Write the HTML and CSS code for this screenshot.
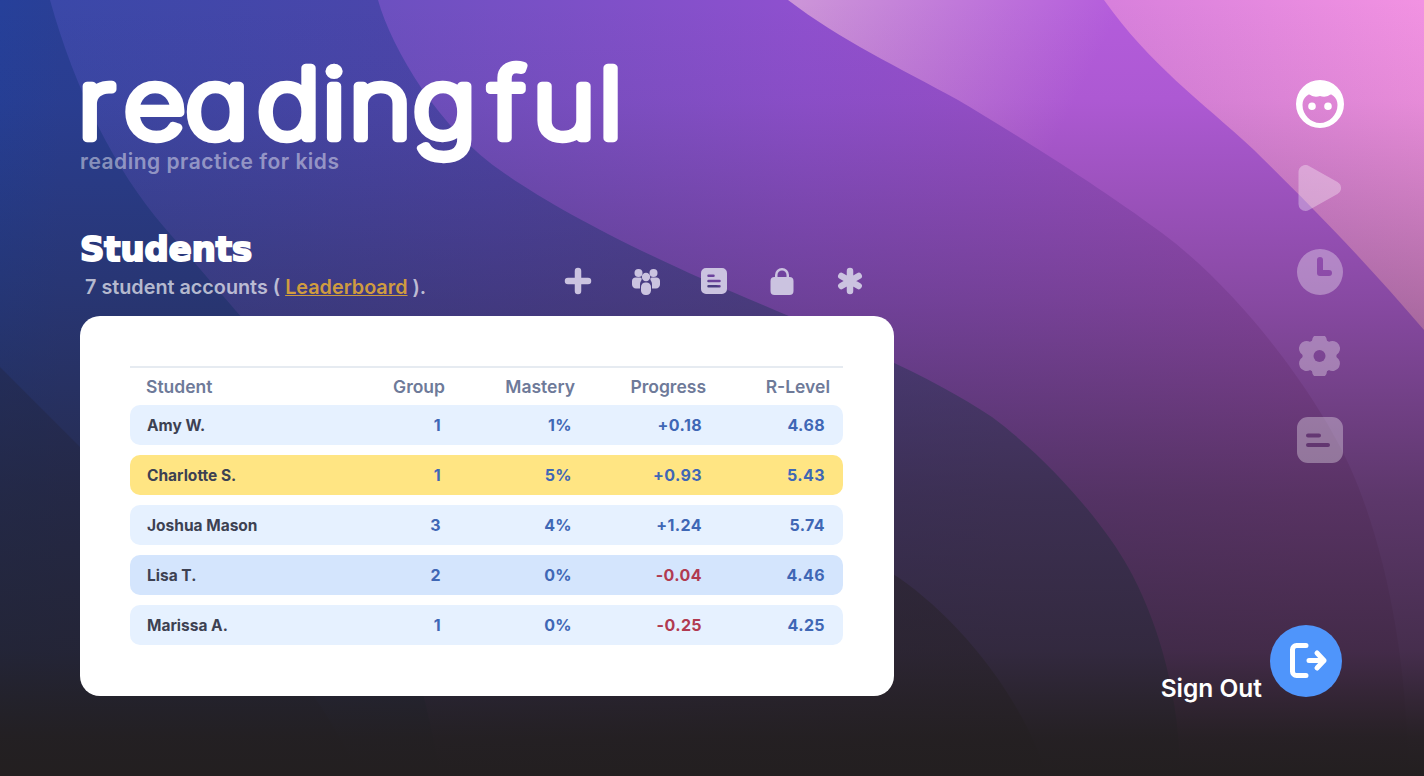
FILE: index.html
```html
<!DOCTYPE html>
<html lang="en">
<head>
    <meta charset="UTF-8">
    <title>Readingful - Students</title>
    <link rel="stylesheet" href="styles.css">
</head>
<body>
    <svg class="backdrop" viewBox="0 0 1424 776" preserveAspectRatio="none" aria-hidden="true">
        <defs>
            <linearGradient id="band0" gradientUnits="userSpaceOnUse" x1="0" y1="0" x2="60" y2="0">
                <stop offset="0" stop-color="#26409a"/>
                <stop offset="1" stop-color="#2a3f96"/>
            </linearGradient>
            <linearGradient id="band1" gradientUnits="userSpaceOnUse" x1="50" y1="0" x2="1000" y2="0">
                <stop offset="0" stop-color="#3a48a8"/>
                <stop offset="0.47" stop-color="#5045ac"/>
                <stop offset="1" stop-color="#6449a0"/>
            </linearGradient>
            <linearGradient id="band2" gradientUnits="userSpaceOnUse" x1="380" y1="0" x2="1300" y2="0">
                <stop offset="0" stop-color="#6c50c0"/>
                <stop offset="0.46" stop-color="#8f50cf"/>
                <stop offset="1" stop-color="#a850c9"/>
            </linearGradient>
            <linearGradient id="band3" gradientUnits="userSpaceOnUse" x1="800" y1="0" x2="1060" y2="130">
                <stop offset="0" stop-color="#cc94d8"/>
                <stop offset="1" stop-color="#b45cdc"/>
            </linearGradient>
            <linearGradient id="band4" gradientUnits="userSpaceOnUse" x1="1120" y1="60" x2="1424" y2="10">
                <stop offset="0" stop-color="#d880dc"/>
                <stop offset="1" stop-color="#f292e2"/>
            </linearGradient>
            <linearGradient id="deep" gradientUnits="userSpaceOnUse" x1="300" y1="0" x2="880" y2="0">
                <stop offset="0" stop-color="#231f20" stop-opacity="0"/>
                <stop offset="1" stop-color="#231f20" stop-opacity="0.4"/>
            </linearGradient>
            <linearGradient id="fade" x1="0" y1="0" x2="0" y2="1">
                <stop offset="0" stop-color="#231f20" stop-opacity="0"/>
                <stop offset="0.13" stop-color="#231f20" stop-opacity="0.05"/>
                <stop offset="0.39" stop-color="#231f20" stop-opacity="0.31"/>
                <stop offset="0.64" stop-color="#231f20" stop-opacity="0.6"/>
                <stop offset="0.84" stop-color="#231f20" stop-opacity="0.76"/>
                <stop offset="0.9" stop-color="#231f20" stop-opacity="0.88"/>
                <stop offset="0.95" stop-color="#231f20" stop-opacity="0.97"/>
                <stop offset="1" stop-color="#231f20"/>
            </linearGradient>
        </defs>
        <rect width="1424" height="776" fill="url(#band0)"/>
        <path fill="url(#band1)" d="M50 0C75 90 115 170 164 227C200 268 225 300 280 360C340 430 420 640 440 776H1424V0Z"/>
        <path class="shade" d="M0 367L80 447C200 560 300 650 360 776H0Z"/>
        <path fill="url(#deep)" d="M300 440C600 470 800 515 890 572C950 610 1020 690 1047 776H300Z"/>
        <path fill="url(#band2)" d="M378 0C392 50 440 130 504 173C560 212 650 258 763 305C840 338 930 375 992 417C1050 460 1105 525 1128 567C1155 615 1180 690 1180 776H1424V0Z"/>
        <path fill="url(#band3)" d="M788 0C840 40 900 68 958 100C1000 125 1090 180 1162 233C1245 295 1320 400 1350 467C1385 545 1408 660 1408 776H1424V0Z"/>
        <path fill="url(#band4)" d="M1104 0C1150 65 1200 100 1254 150C1300 195 1360 255 1424 330V0Z"/>
        <rect width="1424" height="776" fill="url(#fade)"/>
    </svg>

    <div class="page">
        <main class="content">
            <!-- Logo -->
            <header class="brand">
                <svg class="wordmark" viewBox="0 0 560 130" role="img" aria-label="readingful">
                    <text transform="scale(1.12 1)" x="-2 39 94 158 216 240 297 366 404 463" y="90">readingful</text>
                </svg>
                <p class="tagline">reading practice for kids</p>
            </header>

            <!-- Students heading and tools -->
            <section class="students-head">
                <div>
                    <h1>Students</h1>
                    <p class="count">7 student accounts ( <a href="#">Leaderboard</a> ).</p>
                </div>
                <div class="tools">
                    <svg viewBox="0 0 28 28"><path d="M14 4v20M4 14h20" class="tool-line"/></svg>
                    <svg viewBox="0 0 28 28"><circle cx="6.500" cy="6" r="4"/><circle cx="21.500" cy="6" r="4"/><path d="M0 14c0-2 1.500-3.500 3.500-3.500h4.500c1.500 0 2 1 1.500 2.500c-1 1.500-1.500 3-1.500 5v3.500H4c-2.300 0-4-1.700-4-4zM28 14c0-2-1.500-3.500-3.500-3.500H20c-1.500 0-2 1-1.500 2.500c1 1.500 1.500 3 1.500 5v3.500h4c2.300 0 4-1.700 4-4z"/><circle cx="14" cy="10" r="4.200"/><rect x="9" y="15.500" width="10" height="12.500" rx="4.500"/></svg>
                    <svg viewBox="0 0 28 28"><path fill-rule="evenodd" d="M6 1h16a5 5 0 0 1 5 5v16a5 5 0 0 1-5 5H6a5 5 0 0 1-5-5V6a5 5 0 0 1 5-5zM8.500 7.500a1 1 0 0 0 0 2.500h5a1 1 0 0 0 0-2.500zM8.500 12.800a1 1 0 0 0 0 2.500h11a1 1 0 0 0 0-2.500zM8.500 18a1 1 0 0 0 0 2.500h11a1 1 0 0 0 0-2.500z"/></svg>
                    <svg viewBox="0 0 28 28"><path fill-rule="evenodd" d="M7 10V8a7 7 0 0 1 14 0v2h.5a4 4 0 0 1 4 4v10a4 4 0 0 1-4 4h-15a4 4 0 0 1-4-4V14a4 4 0 0 1 4-4zM9.500 10h9V8a4.500 4.500 0 0 0-9 0z"/></svg>
                    <svg viewBox="0 0 28 28"><path d="M14 4v20M5.300 9l17.400 10M22.700 9L5.300 19" class="tool-line"/></svg>
                </div>
            </section>

            <!-- Student table -->
            <div class="card">
                <table>
                    <thead>
                        <tr>
                            <th>Student</th>
                            <th>Group</th>
                            <th>Mastery</th>
                            <th>Progress</th>
                            <th>R-Level</th>
                        </tr>
                    </thead>
                    <tbody>
                        <tr><td>Amy W.</td><td>1</td><td>1%</td><td>+0.18</td><td>4.68</td></tr>
                        <tr class="row-gold"><td>Charlotte S.</td><td>1</td><td>5%</td><td>+0.93</td><td>5.43</td></tr>
                        <tr><td>Joshua Mason</td><td>3</td><td>4%</td><td>+1.24</td><td>5.74</td></tr>
                        <tr class="row-blue"><td>Lisa T.</td><td>2</td><td>0%</td><td class="down">-0.04</td><td>4.46</td></tr>
                        <tr><td>Marissa A.</td><td>1</td><td>0%</td><td class="down">-0.25</td><td>4.25</td></tr>
                    </tbody>
                </table>
            </div>
        </main>

        <!-- Side navigation -->
        <aside class="side">
            <nav class="side-nav">
                <svg class="active" viewBox="0 0 48 48"><path fill-rule="evenodd" d="M24 0a24 24 0 1 1 0 48a24 24 0 0 1 0-48zM6.500 25C6.500 21 8 18 10.500 16C12 14.500 13.500 14 14.500 15C17 17 21 17 24 16C27 17 31 17 33.500 15C34.500 14 36 14.500 37.500 16C40 18 41.500 21 41.500 25C41.500 35 33 43 24 43C15 43 6.500 35 6.500 25zM16 22.500a3.800 3.800 0 1 0 0 7.600a3.800 3.800 0 0 0 0-7.600zM32 22.500a3.800 3.800 0 1 0 0 7.600a3.800 3.800 0 0 0 0-7.600z"/></svg>
                <svg class="play" viewBox="0 0 48 48"><path d="M9.500 8V40L38 24Z"/></svg>
                <svg viewBox="0 0 48 48"><path fill-rule="evenodd" d="M24 1a23 23 0 1 1 0 46a23 23 0 0 1 0-46zM21 12v13a3 3 0 0 0 3 3h9a3 3 0 0 0 0-6h-6v-10a3 3 0 0 0-6 0z"/></svg>
                <svg viewBox="0 0 48 48">
                    <mask id="gear-hole"><rect width="48" height="48" fill="#fff"/><circle cx="23.500" cy="24" r="6" fill="#000"/></mask>
                    <g mask="url(#gear-hole)">
                        <circle cx="23.500" cy="24" r="17"/>
                        <path class="gear-teeth" d="M23.500 9V39M10.500 16.500L36.500 31.500M36.500 16.500L10.500 31.500"/>
                    </g>
                </svg>
                <svg viewBox="0 0 48 48"><path fill-rule="evenodd" d="M12 1h24a11 11 0 0 1 11 11v24a11 11 0 0 1-11 11H12A11 11 0 0 1 1 36V12A11 11 0 0 1 12 1zM12 17.500a2 2 0 0 0 0 4h11a2 2 0 0 0 0-4zM12 27a2 2 0 0 0 0 4h20a2 2 0 0 0 0-4z"/></svg>
            </nav>
            <a class="sign-out" href="#">
                <span class="sign-out-label">Sign Out</span>
                <span class="sign-out-btn">
                    <svg viewBox="0 0 40 40"><path d="M20 4.500H10.500a4 4 0 0 0-4 4v22a4 4 0 0 0 4 4H20M23 19.500h15M31 12l7 7.500l-7 7.500"/></svg>
                </span>
            </a>
        </aside>
    </div>
</body>
</html>
```

FILE: styles.css
```css
/* General */
* {
    box-sizing: border-box;
}

html, body {
    height: 100%;
}

body {
    margin: 0;
    overflow: hidden;
    background-color: #231f20;
    font-family: "Inter", "Lato", sans-serif;
    font-weight: 600;
    color: #fff;
}

/* Background */
.backdrop {
    position: absolute;
    inset: 0;
    width: 100%;
    height: 100%;
}

.shade { fill: #1c2240; fill-opacity: 0.28; }

.page {
    position: relative;
    display: flex;
    justify-content: space-between;
    height: 100%;
    padding: 0 80px;
}

/* Left column */
.content {
    width: 814px;
}

.brand {
    padding-top: 48px;
}

.wordmark {
    display: block;
    width: 560px;
    height: 130px;
    margin-bottom: -29px;
    overflow: visible;
}

.wordmark text {
    font-family: "Inter", sans-serif;
    font-feature-settings: "cv11" 1;
    font-size: 96px;
    font-weight: 200;
    fill: #fff;
    stroke: #fff;
    stroke-width: 8.500px;
    stroke-linejoin: round;
    stroke-linecap: round;
}

.tagline {
    margin: 0;
    font-size: 21px;
    line-height: 26px;
    letter-spacing: 0.5px;
    color: rgba(255, 255, 255, 0.46);
}

.students-head {
    display: flex;
    justify-content: space-between;
    align-items: flex-end;
    margin-top: 55px;
    padding-right: 30px;
}

h1 {
    margin: 0 0 4px;
    font-family: "DejaVu Sans", sans-serif;
    font-size: 33.800px;
    line-height: 40px;
    font-weight: 700;
    -webkit-text-stroke: 2px #fff;
}

.count {
    margin: 0 0 0 5px;
    font-size: 19.800px;
    line-height: 26px;
    color: rgba(255, 255, 255, 0.66);
}

.count a {
    color: #cf9c3f;
}

.tools {
    display: flex;
    gap: 40px;
    padding-bottom: 5px;
}

.tools svg {
    width: 28px;
    height: 28px;
    fill: #cbc3e0;
}

.tool-line {
    stroke: #cbc3e0;
    stroke-width: 6.500;
    stroke-linecap: round;
}

/* Card and table */
.card {
    margin-top: 16px;
    height: 380px;
    padding: 50px 51px 0 50px;
    background-color: #fff;
    border-radius: 20px;
}

table {
    width: 100%;
    border-collapse: separate;
    border-spacing: 0 10px;
    margin-top: -10px;
    table-layout: fixed;
    font-size: 16px;
    letter-spacing: 0.4px;
}

th {
    height: 29px;
    padding: 10px 13px 0 0;
    border-top: 2px solid #e6ebf1;
    text-align: right;
    vertical-align: top;
    font-size: 17.500px;
    line-height: 17px;
    font-weight: 600;
    letter-spacing: 0;
    color: #6e7a99;
}

th:first-child {
    width: 233px;
    padding-left: 16px;
    text-align: left;
}

th:nth-child(2) { width: 95px; }
th:nth-child(3) { width: 130px; }
th:nth-child(4) { width: 131px; }

td {
    height: 40px;
    padding: 0 17px 0 0;
    text-align: right;
    background-color: #e6f1ff;
    color: #3f67b5;
    font-weight: 700;
}

td:first-child {
    padding-left: 17px;
    text-align: left;
    font-size: 15.500px;
    letter-spacing: 0;
    border-radius: 10px 0 0 10px;
    color: #3d4152;
}

td:nth-child(3) { padding-right: 16px; }

td:last-child {
    padding-right: 18px;
    border-radius: 0 10px 10px 0;
}

.row-gold td { background-color: #ffe583; }
.row-blue td { background-color: #d4e5fd; }
td.down { color: #b13a50; }

/* Right column */
.side {
    display: flex;
    flex-direction: column;
    justify-content: space-between;
    align-items: flex-end;
    padding: 80px 0 79px;
}

.side-nav {
    display: flex;
    flex-direction: column;
    gap: 36px;
}

.side-nav svg {
    display: block;
    width: 48px;
    height: 48px;
    fill: #fff;
    opacity: 0.32;
}

.side-nav svg.active {
    opacity: 1;
}

.side-nav .play path {
    stroke: #fff;
    stroke-width: 14;
    stroke-linejoin: round;
}

.gear-teeth {
    stroke: #fff;
    stroke-width: 15;
    stroke-linecap: round;
}

.sign-out {
    display: flex;
    align-items: flex-end;
    gap: 8px;
    margin-right: 2px;
    color: #fff;
    text-decoration: none;
}

.sign-out-label {
    font-size: 24.500px;
    line-height: 28px;
    margin-bottom: -5px;
}

.sign-out-btn {
    display: flex;
    align-items: center;
    justify-content: center;
    width: 72px;
    height: 72px;
    border-radius: 50%;
    background-color: #4f95fb;
}

.sign-out-btn svg {
    width: 40px;
    height: 40px;
    overflow: visible;
    fill: none;
    stroke: #fff;
    stroke-width: 5;
    stroke-linecap: round;
    stroke-linejoin: round;
}
```
